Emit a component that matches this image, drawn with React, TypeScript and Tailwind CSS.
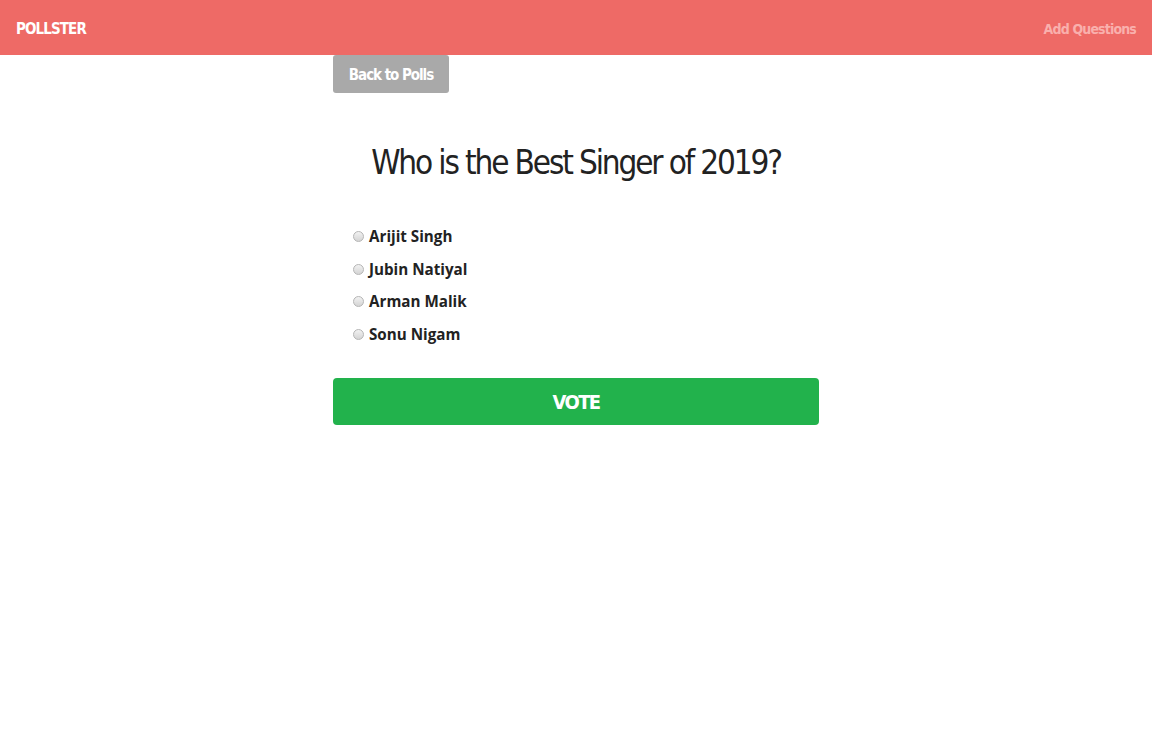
import { useState } from "react";

const options = ["Arijit Singh", "Jubin Natiyal", "Arman Malik", "Sonu Nigam"];

const condensed = "font-['DejaVu_Sans_Condensed','Roboto_Condensed',sans-serif]";

export default function App() {
  const [choice, setChoice] = useState("");

  return (
    <div className="min-h-[750px] bg-white">
      <header className="flex h-[55px] items-center justify-between bg-[#ee6a66] px-4 pt-[3px]">
        <span className={`${condensed} text-[15px] font-bold tracking-[-0.06em] text-white`}>
          POLLSTER
        </span>
        <a href="#" className={`${condensed} text-[14px] font-bold tracking-[-0.06em] text-[#f9b0ad]`}>
          Add Questions
        </a>
      </header>

      <main className="mx-auto w-[486px]">
        <button
          type="button"
          className={`${condensed} flex h-[38px] w-[116px] items-center justify-center rounded-[3px] bg-[#a9a9a9] pt-[2px] text-[15px] font-bold tracking-[-0.07em] text-white`}
        >
          Back to Polls
        </button>

        <h1
          className={`${condensed} mt-[50px] text-center text-[33px] leading-[40px] tracking-[-0.065em] text-[#222]`}
        >
          Who is the Best Singer of 2019?
        </h1>

        <form onSubmit={(event) => event.preventDefault()} className="mt-[43px]">
          <div className="flex flex-col gap-[11px] pl-[20px]">
            {options.map((option) => (
              <label
                key={option}
                className="flex h-[21.5px] cursor-pointer items-center gap-[5px] font-['Open_Sans',sans-serif] text-[15.2px] font-bold text-[#222]"
              >
                <input
                  type="radio"
                  name="poll"
                  checked={choice === option}
                  onChange={() => setChoice(option)}
                  className="m-0 h-[11px] w-[11px] appearance-none rounded-full border border-[#b5b5b5] bg-gradient-to-b from-[#f2f2f2] to-[#d4d4d4] checked:bg-[#888]"
                />
                {option}
              </label>
            ))}
          </div>

          <button
            type="submit"
            className={`${condensed} mt-[33px] flex h-[47px] w-full items-center justify-center rounded-[4px] bg-[#22b24c] text-[20px] font-bold tracking-[-0.08em] text-white`}
          >
            VOTE
          </button>
        </form>
      </main>
    </div>
  );
}
